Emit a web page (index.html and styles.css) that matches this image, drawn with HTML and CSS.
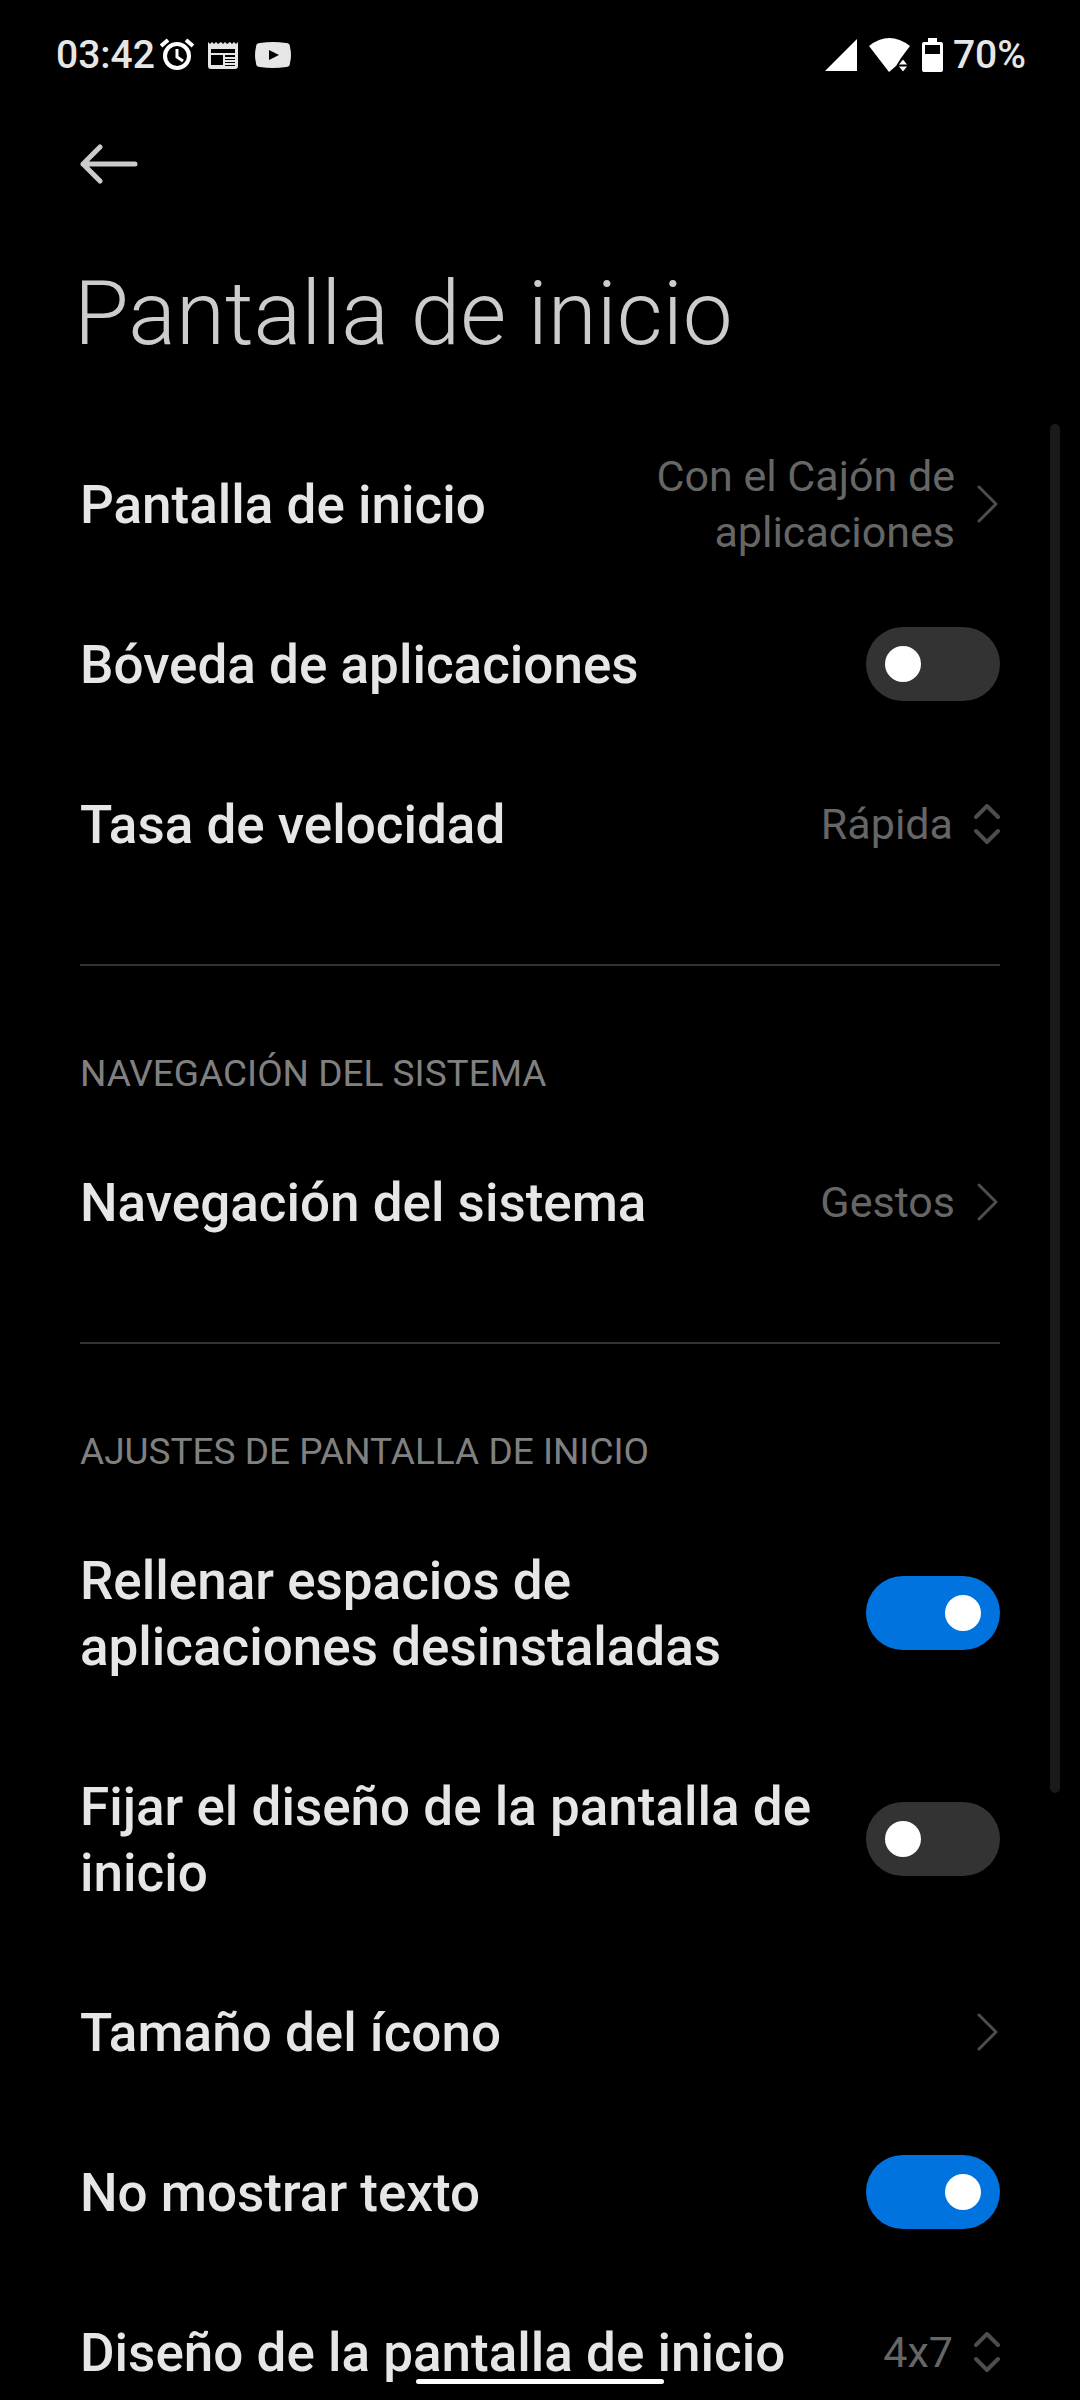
FILE: index.html
```html
<!DOCTYPE html>
<html lang="es">
<head>
    <meta charset="utf-8">
    <meta name="viewport" content="width=device-width, initial-scale=1">
    <title>Pantalla de inicio</title>
    <link rel="stylesheet" href="styles.css">
</head>
<body>

<div class="screen">
    <div class="status-bar">
        <div class="status-left">
            <span>03:42</span>
            <svg class="alarm" width="34" height="34" viewBox="0 0 34 34" fill="none" stroke="#fff">
                <circle cx="17" cy="18" r="12" stroke-width="4"/>
                <path d="M17 11v8l6 4" stroke-width="3"/>
                <path d="M1 8l7-6M33 8l-7-6" stroke-width="4"/>
            </svg>
            <svg class="calendar" width="30" height="28" viewBox="0 0 30 28">
                <path fill="#e6e6e6" fill-rule="evenodd" d="M0 1l2 2 2-2 2 2 2-2 2 2 3-2 2 2 2-2 2 2 3-2 2 2 2-2 2 2 2-2v24a3 3 0 0 1-3 3H3a3 3 0 0 1-3-3zM3 8v4h24V8zM3 14v10h12V14zM17 14v2h10v-2zM17 18v1h10v-1zM17 21v1h10v-1zM17 24v1h10v-1z"/>
            </svg>
            <svg width="36" height="26" viewBox="0 0 36 26">
                <path fill="#e6e6e6" fill-rule="evenodd" d="M5 1Q18-1 31 1q4 0 4 4 2 8 0 16 0 4-4 4-13 2-26 0-4 0-4-4-2-8 0-16 0-4 4-4zM14 8v10l10-5z"/>
            </svg>
        </div>
        <div class="status-right">
            <svg width="32" height="32" viewBox="0 0 32 32"><path fill="#fff" d="M32 0v32H0z"/></svg>
            <svg class="wifi" width="41" height="34" viewBox="0 0 41 34">
                <path fill="#fff" d="M0 8Q20-8 41 8L32 20l-5 8L20 34z"/>
                <path fill="#fff" stroke="#000" d="M34 21l5 6H29zM34 34l5-6H29z"/>
            </svg>
            <svg class="battery" width="21" height="34" viewBox="0 0 21 34">
                <path fill="#fff" fill-rule="evenodd" d="M6 0h9v4h4a2 2 0 0 1 2 2v26a2 2 0 0 1-2 2H2a2 2 0 0 1-2-2V6a2 2 0 0 1 2-2h4zM3 7v9h15V7z"/>
            </svg>
            <span>70%</span>
        </div>
    </div>

    <header>
        <button class="back" type="button" aria-label="Atrás">
            <svg width="58" height="40" viewBox="0 0 58 40" fill="none" stroke="#ccc" stroke-width="5" stroke-linecap="round" stroke-linejoin="round">
                <path d="M55 20H3M20 3L3 20l17 17"/>
            </svg>
        </button>
        <h1>Pantalla de inicio</h1>
    </header>

    <main>
        <section>
            <a class="row" href="#inicio">
                <span class="label">Pantalla de inicio</span>
                <span class="value">Con el Cajón de aplicaciones</span>
                <svg class="arrow" viewBox="0 0 24 40"><path d="M3 3l17 17L3 37"/></svg>
            </a>
            <div class="row">
                <label class="label" for="boveda">Bóveda de aplicaciones</label>
                <input class="switch" type="checkbox" id="boveda">
            </div>
            <div class="row">
                <label class="label" for="tasa">Tasa de velocidad</label>
                <select class="value" id="tasa">
                    <option>Rápida</option>
                </select>
                <svg class="updown" viewBox="0 0 26 42"><path d="M2 14L13 3l11 11M2 28l11 11 11-11"/></svg>
            </div>
        </section>

        <section>
            <h2>NAVEGACIÓN DEL SISTEMA</h2>
            <a class="row" href="#navegacion">
                <span class="label">Navegación del sistema</span>
                <span class="value">Gestos</span>
                <svg class="arrow" viewBox="0 0 24 40"><path d="M3 3l17 17L3 37"/></svg>
            </a>
        </section>

        <section>
            <h2>AJUSTES DE PANTALLA DE INICIO</h2>
            <div class="row">
                <label class="label" for="rellenar">Rellenar espacios de aplicaciones desinstaladas</label>
                <input class="switch" type="checkbox" id="rellenar" checked>
            </div>
            <div class="row">
                <label class="label" for="fijar">Fijar el diseño de la pantalla de inicio</label>
                <input class="switch" type="checkbox" id="fijar">
            </div>
            <a class="row" href="#icono">
                <span class="label">Tamaño del ícono</span>
                <svg class="arrow" viewBox="0 0 24 40"><path d="M3 3l17 17L3 37"/></svg>
            </a>
            <div class="row">
                <label class="label" for="texto">No mostrar texto</label>
                <input class="switch" type="checkbox" id="texto" checked>
            </div>
            <div class="row">
                <label class="label" for="diseno">Diseño de la pantalla de inicio</label>
                <select class="value" id="diseno">
                    <option>4x7</option>
                </select>
                <svg class="updown" viewBox="0 0 26 42"><path d="M2 14L13 3l11 11M2 28l11 11 11-11"/></svg>
            </div>
        </section>
        <div class="scrollbar"></div>
    </main>
    <div class="home-bar"></div>
</div>

</body>
</html>
```
FILE: styles.css
```css
* {
    box-sizing: border-box;
}

body {
    margin: 0;
    background-color: #000;
    color: #e6e6e6;
    font-family: Roboto, sans-serif;
}

h1, h2 {
    margin: 0;
    font-weight: normal;
}

svg {
    display: block;
    flex: none;
}

.screen {
    position: relative;
    display: flex;
    flex-direction: column;
    height: 100vh;
    overflow: hidden;
}

/* status bar */
.status-bar {
    display: flex;
    justify-content: space-between;
    padding: 31px 54px 0 56px;
    font-size: 39px;
    font-weight: 500;
    line-height: 48px;
}

.status-left, .status-right {
    display: flex;
    align-items: center;
}

.alarm {
    margin-left: 5px;
}

.calendar {
    margin: 0 17px 0 14px;
}

.wifi {
    margin: 0 12px;
}

.battery {
    margin-right: 10px;
}

/* header */
header {
    padding: 65px 74px 0;
}

.back {
    display: block;
    padding: 0 6px;
    border: none;
    background: none;
    cursor: pointer;
}

h1 {
    margin-top: 70px;
    color: #ccc;
    font-size: 89px;
    font-weight: 300;
    line-height: 120px;
}

/* settings list */
main {
    position: relative;
    flex: 1;
    min-height: 0;
    margin-top: 50px;
    padding: 0 80px;
    overflow: hidden;
}

section + section {
    margin-top: 60px;
    padding-top: 80px;
    border-top: 2px solid #333;
}

h2 {
    padding-bottom: 20px;
    color: #808080;
    font-size: 37px;
    line-height: 56px;
}

.row {
    display: flex;
    align-items: center;
    color: inherit;
    text-decoration: none;
}

.label {
    flex: 1;
    padding: 48px 0 46px;
    font-size: 53px;
    font-weight: 500;
    line-height: 66px;
}

.value {
    max-width: 320px;
    margin: 0 21px 0 40px;
    padding: 0;
    border: none;
    background: none;
    color: #666;
    font-family: inherit;
    font-size: 43px;
    line-height: 56px;
    text-align: right;
    text-align-last: right;
    appearance: none;
}

.arrow, .updown {
    fill: none;
    stroke: #4d4d4d;
    stroke-width: 3;
    stroke-linecap: round;
    stroke-linejoin: round;
}

.arrow {
    width: 24px;
    height: 40px;
}

.updown {
    width: 26px;
    height: 42px;
    stroke-width: 4;
}

.switch {
    flex: none;
    width: 134px;
    height: 74px;
    margin: 0 0 0 40px;
    padding: 19px;
    border-radius: 37px;
    background-color: #333;
    appearance: none;
    cursor: pointer;
}

.switch::before {
    content: "";
    display: block;
    width: 36px;
    height: 36px;
    border-radius: 50%;
    background-color: #fff;
}

.switch:checked {
    background-color: #0073de;
}

.switch:checked::before {
    margin-left: auto;
}

.scrollbar {
    position: absolute;
    top: 0;
    right: 20px;
    width: 10px;
    height: 69.3%;
    border-radius: 5px;
    background-color: #1a1a1a;
}

/* gesture handle, drawn over the list */
.home-bar {
    position: absolute;
    bottom: 16px;
    left: 50%;
    width: 248px;
    height: 5px;
    margin-left: -124px;
    border-radius: 3px;
    background-color: #fff;
}
```
